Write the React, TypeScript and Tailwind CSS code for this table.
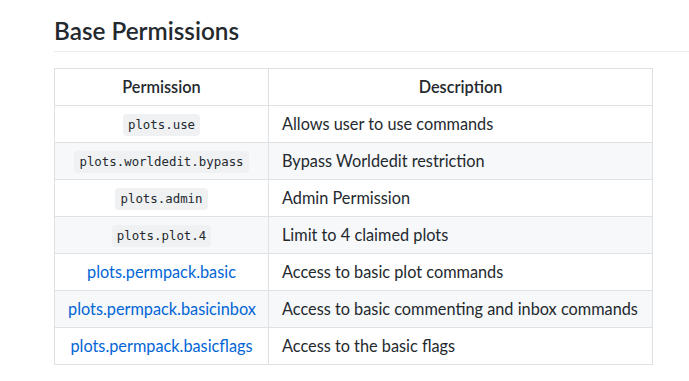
const rows: { perm: string; desc: string; link?: boolean }[] = [
  { perm: 'plots.use', desc: 'Allows user to use commands' },
  { perm: 'plots.worldedit.bypass', desc: 'Bypass Worldedit restriction' },
  { perm: 'plots.admin', desc: 'Admin Permission' },
  { perm: 'plots.plot.4', desc: 'Limit to 4 claimed plots' },
  { perm: 'plots.permpack.basic', desc: 'Access to basic plot commands', link: true },
  { perm: 'plots.permpack.basicinbox', desc: 'Access to basic commenting and inbox commands', link: true },
  { perm: 'plots.permpack.basicflags', desc: 'Access to the basic flags', link: true },
]

export default function App() {
  return (
    <div className="min-h-screen w-full bg-white pl-[54px] pt-[16px] font-['Lato',sans-serif] text-[16.3px] text-[#24292e]">
      <h2 className="border-b border-[#eaecef] pb-[5px] text-[24.3px] font-semibold leading-[30px]">
        Base Permissions
      </h2>
      <table className="mt-[16px] w-[598px] table-fixed border-collapse whitespace-nowrap">
        <colgroup>
          <col className="w-[214px]" />
          <col className="w-[384px]" />
        </colgroup>
        <thead>
          <tr>
            <th className="border border-[#dfe2e5] px-[13px] py-[6px] text-center font-semibold leading-[24px]">
              Permission
            </th>
            <th className="border border-[#dfe2e5] px-[13px] py-[6px] text-center font-semibold leading-[24px]">
              Description
            </th>
          </tr>
        </thead>
        <tbody>
          {rows.map((r) => (
            <tr key={r.perm} className="bg-white even:bg-[#f6f8fa]">
              <td className="h-[37px] border border-[#dfe2e5] px-[13px] py-0 text-center leading-[24px]">
                {r.link ? (
                  <a href="#" className="text-[#0366d6]">
                    {r.perm}
                  </a>
                ) : (
                  <code className="inline-block rounded-[4px] bg-[#eff1f3] px-[5px] py-[3px] align-middle font-['DejaVu_Sans_Mono',monospace] text-[12.4px] leading-[16px]">
                    {r.perm}
                  </code>
                )}
              </td>
              <td className="h-[37px] border border-[#dfe2e5] px-[13px] py-0 text-left leading-[24px]">{r.desc}</td>
            </tr>
          ))}
        </tbody>
      </table>
    </div>
  )
}
